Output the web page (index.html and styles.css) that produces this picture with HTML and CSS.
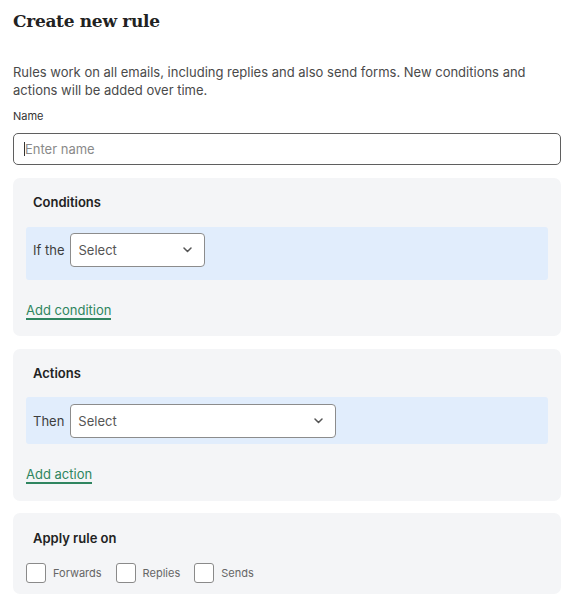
FILE: index.html
```html
<!DOCTYPE html>
<html lang="en">
<head>
  <meta charset="UTF-8">
  <meta name="viewport" content="width=device-width, initial-scale=1.0">
  <title>Create new rule</title>
  <link rel="stylesheet" href="styles.css">
</head>
<body>
  <div class="page">
    <h1 class="title">Create new rule</h1>
    <p class="intro">Rules work on all emails, including replies and also send forms. New conditions and actions will be added over time.</p>

    <label class="field-label" for="ruleName">Name</label>
    <div class="name-input"><span class="caret"></span><span class="placeholder">Enter name</span></div>

    <div class="card card-conditions">
      <div class="card-title">Conditions</div>
      <div class="rule-row">
        <span class="row-label">If the</span>
        <div class="select select-short">
          <span>Select</span>
          <svg width="9" height="6" viewBox="0 0 9 6"><path d="M1 1l3.5 3.5 3.5-3.5" fill="none" stroke="#555" stroke-width="1.5" stroke-linecap="round" stroke-linejoin="round"/></svg>
        </div>
      </div>
      <a class="add-link" href="#">Add condition</a>
    </div>

    <div class="card card-actions">
      <div class="card-title">Actions</div>
      <div class="rule-row rule-row-actions">
        <span class="row-label">Then</span>
        <div class="select select-long">
          <span>Select</span>
          <svg width="9" height="6" viewBox="0 0 9 6"><path d="M1 1l3.5 3.5 3.5-3.5" fill="none" stroke="#555" stroke-width="1.5" stroke-linecap="round" stroke-linejoin="round"/></svg>
        </div>
      </div>
      <a class="add-link" href="#">Add action</a>
    </div>

    <div class="card card-apply">
      <div class="card-title">Apply rule on</div>
      <div class="checks">
        <label class="check"><span class="box"></span>Forwards</label>
        <label class="check"><span class="box"></span>Replies</label>
        <label class="check"><span class="box"></span>Sends</label>
      </div>
    </div>
  </div>
</body>
</html>
```

FILE: styles.css
```css
body {
  margin: 0;
  font-family: Inter, "Noto Sans", sans-serif;
  background-color: white;
  color: #3d3d3d;
}
.page {
  padding: 0 13px;
}
.title {
  margin: 0;
  padding-top: 11px;
  font-family: "DejaVu Serif", serif;
  font-size: 17px;
  font-weight: bold;
  color: #222;
  letter-spacing: -0.3px;
}
.intro {
  margin: 32px 0 0;
  font-size: 13px;
  line-height: 18px;
  color: #4a4a4a;
}
.field-label {
  display: block;
  margin-top: 9px;
  font-size: 11px;
  line-height: 16px;
  color: #333;
}
.name-input {
  margin-top: 9px;
  height: 32px;
  border: 1px solid #5f5f5f;
  border-radius: 5px;
  display: flex;
  align-items: center;
  padding-left: 10px;
  box-sizing: border-box;
  font-size: 13px;
}
.caret {
  width: 1px;
  height: 14px;
  background-color: #333;
}
.placeholder {
  color: #8a8a8a;
}
.card {
  margin-top: 13px;
  background-color: #f4f5f7;
  border-radius: 7px;
  padding: 16px 13px 17px;
}
.card-conditions {
  padding-bottom: 16px;
}
.card-actions {
  padding-top: 16px;
  padding-bottom: 17px;
}
.card-title {
  padding-left: 7px;
  font-size: 13px;
  font-weight: 600;
  line-height: 16px;
  color: #222;
}
.rule-row {
  margin-top: 17px;
  background-color: #e1edfc;
  border-radius: 3px;
  padding: 6px 7px 13px;
  display: flex;
  align-items: center;
}
.rule-row-actions {
  margin-top: 16px;
  padding: 7px 7px 6px;
}
.row-label {
  font-size: 13px;
  color: #3d3d3d;
  margin-right: 6px;
}
.select {
  height: 34px;
  box-sizing: border-box;
  background-color: white;
  border: 1px solid #8c8c8c;
  border-radius: 4px;
  display: flex;
  align-items: center;
  justify-content: space-between;
  padding: 0 12px 0 7px;
  font-size: 13px;
  color: #555;
}
.select-short {
  width: 135px;
}
.select-long {
  width: 266px;
}
.add-link {
  display: inline-block;
  margin-top: 22px;
  font-size: 13px;
  line-height: 16px;
  color: #2f8560;
  text-decoration: none;
  border-bottom: 2px solid #2f8560;
}
.card-apply {
  margin-top: 12px;
  padding-top: 17px;
  padding-bottom: 11px;
}
.checks {
  margin-top: 17px;
  display: flex;
  gap: 14px;
}
.check {
  display: flex;
  align-items: center;
  font-size: 11px;
  color: #666;
}
.box {
  width: 18px;
  height: 18px;
  border: 1px solid #8a8a8a;
  border-radius: 3px;
  background-color: white;
  margin-right: 7px;
}
```
